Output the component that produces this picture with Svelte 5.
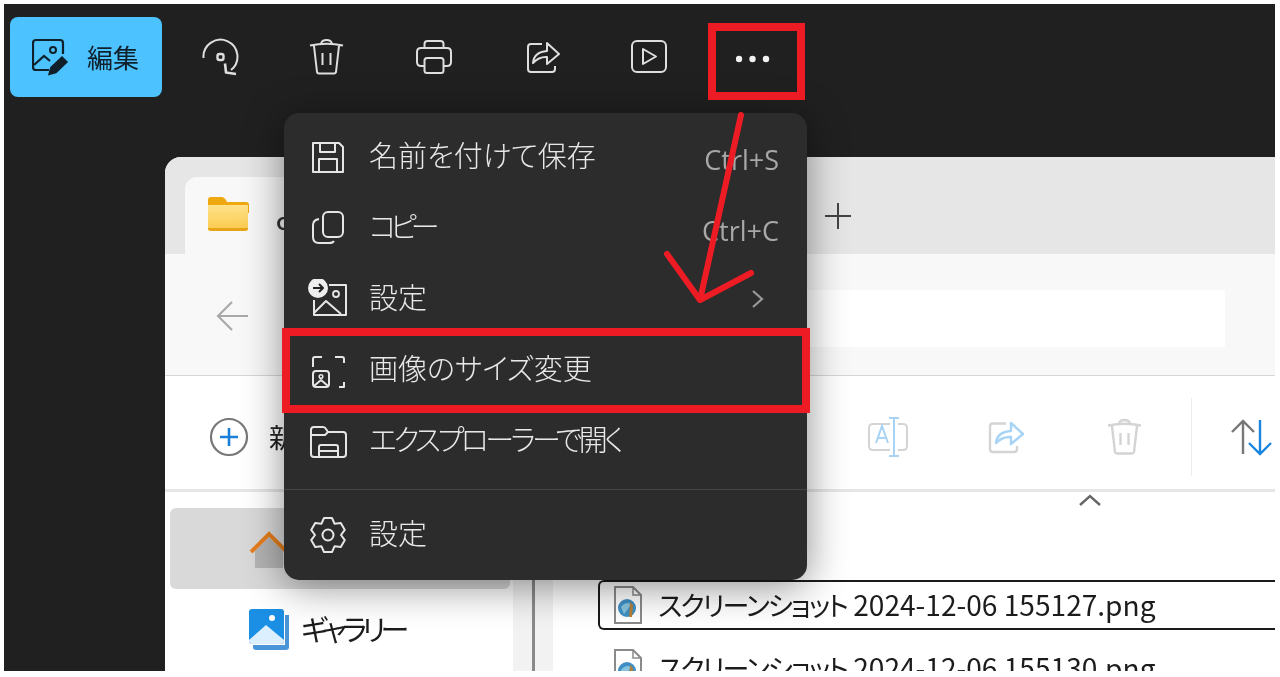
<script>
	// gear outline with six rounded lobes, used by the last menu item
	function gearPath(cx, cy, outer, inner, teeth) {
		let d = '';
		const step = (Math.PI * 2) / teeth;
		for (let i = 0; i < teeth; i++) {
			const a = i * step - Math.PI / 2;
			const p = (r, off) => {
				const x = cx + r * Math.cos(a + off);
				const y = cy + r * Math.sin(a + off);
				return x.toFixed(1) + ' ' + y.toFixed(1);
			};
			d += (i === 0 ? 'M' : 'L') + p(inner, -step * 0.5);
			d += 'L' + p(outer, -step * 0.22);
			d += 'L' + p(outer, step * 0.22);
		}
		return d + 'Z';
	}

	const tools = ['rotate', 'trash', 'print', 'share', 'play', 'more'];

	const menu = [
		{ id: 'save', label: '名前を付けて保存', key: 'Ctrl+S' },
		{ id: 'copy', label: 'コピー', key: 'Ctrl+C', fit: 'kana-short' },
		{ id: 'setas', label: '設定', sub: true },
		{ id: 'resize', label: '画像のサイズ変更' },
		{ id: 'folder', label: 'エクスプローラーで開く', fit: 'kana-long' },
		{ id: 'sep' },
		{ id: 'gear', label: '設定' }
	];

	const files = ['2024-12-06 155127.png', '2024-12-06 155130.png'];
</script>

{#snippet trashIcon()}
	<path d="M3 8.500Q20 5 36 8.500M14 6.500Q15 3 19.500 3T25 6.500M7 9l3 26q.3 1.500 2 1.500h15q1.700 0 2-1.500l3-26M15.500 16v12M23.500 16v12" />
{/snippet}

{#snippet fileIcon()}
	<svg class="file-icon" width="30" height="40" viewBox="0 0 30 40">
		<path d="M2 2h18l8 8v28H2Z" fill="#fff" stroke="#8a8a8a" stroke-width="2" />
		<path d="M20 2v8h8" fill="none" stroke="#8a8a8a" stroke-width="1.500" />
		<circle cx="14" cy="23" r="9" fill="#3f8fc4" />
		<path d="M8 22q5-6 10-3l-3 5-4 5Z" fill="#86c3dd" />
		<path d="M17 17l3 3-1 12-3 0Z" fill="#b5803a" />
	</svg>
{/snippet}

<div class="shot">
	<div class="viewer">
		<header class="toolbar">
			<button class="edit">
				<svg width="40" height="40" viewBox="0 0 40 40" fill="none" stroke="#10202a" stroke-width="2.200">
					<path d="M17 32H4q-3 0-3-3V5q0-3 3-3h24q3 0 3 3v11" />
					<path d="M2 27l10-9 6 5" />
					<circle cx="21" cy="12" r="3" stroke-width="2" />
					<path d="M17 36.500l2-7L30 19l5 5-11 10.500Z" fill="#10202a" stroke-width="1.500" />
				</svg>
				<span>編集</span>
			</button>
			{#each tools as tool}
				<div class="tool">
					<svg width="40" height="40" viewBox="0 0 40 40" fill="none" stroke="#dedede" stroke-width="2" stroke-linejoin="round">
						{#if tool === 'rotate'}
							<path d="M3.500 21A17 17 0 1 1 31 33" />
							<path d="M25 26.500l1 9 10 1.500" stroke-width="2.600" />
							<rect x="17.500" y="17" width="6" height="6" rx="2" stroke-width="2.400" />
						{:else if tool === 'trash'}
							{@render trashIcon()}
						{:else if tool === 'print'}
							<path d="M10.500 11V7q0-3 3-3h13q3 0 3 3v4" />
							<path d="M10.500 29H7q-4 0-4-4V15q0-4 4-4h26q4 0 4 4v10q0 4-4 4h-3.500" />
							<rect x="10.500" y="21" width="19" height="15" rx="2.500" />
						{:else if tool === 'share'}
							<path d="M20 7H9q-3 0-3 3V32q0 3 3 3h21q3 0 3-3v-3" />
							<path d="M11 26q1-11 14-12V6l12 11-12 10v-7q-8-.500-14 6Z" />
						{:else if tool === 'play'}
							<rect x="3" y="4" width="34" height="31" rx="5" />
							<path d="M14 12v15l13-7.500Z" />
						{:else}
							<g fill="#f2f2f2" stroke="none">
								<circle cx="3" cy="22" r="3.200" />
								<circle cx="16.500" cy="22" r="3.200" />
								<circle cx="30" cy="22" r="3.200" />
							</g>
						{/if}
					</svg>
				</div>
			{/each}
		</header>

		<section class="explorer">
			<div class="tabs">
				<div class="tab">
					<svg width="42" height="36" viewBox="0 0 42 36">
						<defs>
							<linearGradient id="folder-front" x1="0" y1="0" x2="0" y2="1">
								<stop offset="0" stop-color="#ffe28a" />
								<stop offset="1" stop-color="#fbc94c" />
							</linearGradient>
						</defs>
						<path d="M1 4q0-3 3-3h11q2 0 4 3l1 2h19q3 0 3 3v8H1Z" fill="#efa90f" />
						<path d="M1 9h40v23q0 3-3 3H4q-3 0-3-3Z" fill="url(#folder-front)" />
						<path d="M1 32h40q0 3-3 3H4q-3 0-3-3Z" fill="#e7a418" />
					</svg>
					<span class="tab-title">o</span>
				</div>
				<svg class="new-tab" width="28" height="28" viewBox="0 0 28 28" stroke="#444" stroke-width="2">
					<path d="M14 1v26M1 14h26" />
				</svg>
			</div>

			<div class="nav">
				<svg width="34" height="32" viewBox="0 0 34 32" fill="none" stroke="#a9a9a9" stroke-width="2.200">
					<path d="M33 16H3M17 2L3 16l14 14" />
				</svg>
				<div class="address"></div>
			</div>

			<div class="commands">
				<svg width="40" height="40" viewBox="0 0 40 40" fill="none">
					<circle cx="20" cy="20" r="18" stroke="#777" stroke-width="2.200" />
					<path d="M20 11v18M11 20h18" stroke="#1a7fd6" stroke-width="2.600" />
				</svg>
				<span class="new-label">新</span>
				<div class="command-icons">
					<svg width="42" height="42" viewBox="0 0 42 42" fill="none" stroke-width="2">
						<path d="M23 8H6q-4 0-4 4v18q0 4 4 4h17M31 8h5q4 0 4 4v18q0 4-4 4h-5" stroke="#d4d4d4" />
						<path d="M9 27l6-17 6 17M11 22h8M22 2h10M27 2v38M22 40h10" stroke="#a7d4f5" />
					</svg>
					<svg width="40" height="40" viewBox="0 0 40 40" fill="none" stroke-width="2.400" stroke-linejoin="round">
						<path d="M19 6.500H6q-3 0-3 3V32q0 3 3 3h21q3 0 3-3v-3" stroke="#d4d4d4" />
						<path d="M9 26q1-11 15-12V6l12 11-12 10v-7q-9-.500-15 6Z" stroke="#a7d4f5" />
					</svg>
					<svg width="40" height="40" viewBox="0 0 40 40" fill="none" stroke="#d4d4d4" stroke-width="2.400">
						{@render trashIcon()}
					</svg>
					<div class="command-sep"></div>
					<svg width="42" height="40" viewBox="0 0 42 40" fill="none" stroke-width="2.400">
						<path d="M13 37V4M2 15L13 4l11 11" stroke="#777" />
						<path d="M30 3v34M19 26l11 11 11-11" stroke="#1a86e0" />
					</svg>
				</div>
			</div>

			<div class="body">
				<aside class="sidebar">
					<div class="side-row selected">
						<svg width="40" height="40" viewBox="0 0 40 40" fill="none">
							<path d="M6 21v17h28V21L20 7Z" fill="#b4b4b4" />
							<path d="M2 22L20 4l18 18" stroke="#e67e1e" stroke-width="4" />
						</svg>
					</div>
					<div class="side-row">
						<svg width="42" height="42" viewBox="0 0 42 42">
							<path d="M4 36h32V6h4v32q0 3-3 3H7q-3 0-3-3Z" fill="#4a94d8" />
							<rect x="0" y="0" width="35" height="35" rx="3" fill="#1a8fe3" />
							<path d="M0 31l17-15 18 15v1q0 3-3 3H3q-3 0-3-3Z" fill="#dcefff" />
							<circle cx="23" cy="9" r="3" fill="#fff" />
						</svg>
						<span class="side-label">ギャラリー</span>
					</div>
				</aside>
				<div class="splitter"><i></i></div>
				<div class="files">
					<div class="sort-hint">
						<svg width="22" height="12" viewBox="0 0 22 12" fill="none" stroke="#666" stroke-width="2.400">
							<path d="M1 11L11 2l10 9" />
						</svg>
					</div>
					{#each files as name, i}
						<div class="file" class:current={i === 0}>
							{@render fileIcon()}
							<span class="file-name"><span class="file-kana">スクリーンショット</span> {name}</span>
						</div>
					{/each}
				</div>
			</div>
		</section>

		<nav class="menu">
			{#each menu as item}
				{#if item.id === 'sep'}
					<div class="menu-sep"></div>
				{:else}
					<div class="menu-item">
						<svg width="40" height="40" viewBox="0 0 40 40" fill="none" stroke="#e6e6e6" stroke-width="2" stroke-linejoin="round">
							{#if item.id === 'save'}
								<path d="M5 6h26l4 4v25H5Z" />
								<path d="M12 6v9h15V6M11 35V22h18v13" />
							{:else if item.id === 'copy'}
								<rect x="15" y="4" width="20" height="25" rx="5" />
								<path d="M11 11q-6 1-6 6v12q0 6 6 6h10q4 0 5-2" />
							{:else if item.id === 'setas'}
								<path d="M21 6h17v30H6V21" />
								<path d="M6 34l12-12 15 13" />
								<circle cx="28" cy="15" r="3" stroke-width="1.800" />
								<circle cx="10" cy="9" r="10" fill="#eee" stroke="none" />
								<path d="M5 9h10M11 5l4 4-4 4" stroke="#222" stroke-width="2" />
							{:else if item.id === 'resize'}
								<path d="M5 17V9q0-2 2-2h7M27 7h7q2 0 2 2v4M36 32v5h-5" />
								<rect x="5" y="21" width="16" height="16" rx="3" />
								<circle cx="13" cy="26.500" r="1.800" stroke-width="1.500" />
								<path d="M6 36l7-6 7 6" />
							{:else if item.id === 'folder'}
								<path d="M3 33V9q0-3 3-3h9q2 0 3 2l2 3h15q3 0 3 3v19q0 3-3 3H6q-3 0-3-3Z" />
								<path d="M3 14h14l3-3M11 35v-9q0-2 2-2h15q2 0 2 2v9M12 30h17" />
							{:else}
								<path d={gearPath(20, 20, 17.500, 13, 6)} />
								<circle cx="20" cy="20" r="5.500" />
							{/if}
						</svg>
						<span class="menu-label {item.fit ?? ''}">{item.label}</span>
						{#if item.key}<span class="menu-key">{item.key}</span>{/if}
						{#if item.sub}
							<svg class="chevron" width="14" height="20" viewBox="0 0 14 20" stroke="#9a9a9a" stroke-width="2.200" fill="none">
								<path d="M2 2l9 8-9 8" />
							</svg>
						{/if}
					</div>
				{/if}
			{/each}
		</nav>
	</div>

	<!-- red annotations drawn over the screenshot -->
	<div class="mark more-mark"></div>
	<div class="mark resize-mark"></div>
	<svg class="arrow" width="1280" height="677" viewBox="0 0 1280 677" fill="none" stroke="#ed1c24" stroke-width="6" stroke-linecap="round" stroke-linejoin="round">
		<path d="M741 115L700 300M667 254L700 300L751 273" />
	</svg>
</div>

<style>
	:global(body) {
		margin: 0;
		background: #fff;
	}

	.shot {
		position: relative;
		width: 1280px;
		height: 677px;
		padding: 4px 5px 6px 4px;
		box-sizing: border-box;
		overflow: hidden;
		background: #fff;
		font-family: "Noto Sans CJK JP", "Noto Sans", sans-serif;
		font-feature-settings: "palt";
	}

	.viewer {
		position: relative;
		height: 100%;
		overflow: hidden;
		background: #202020;
		filter: blur(0.7px);
	}

	.toolbar {
		display: flex;
		align-items: center;
		height: 153px;
		box-sizing: border-box;
		padding: 13px 0 60px 6px;
	}

	.edit {
		display: flex;
		align-items: center;
		gap: 15px;
		width: 152px;
		height: 80px;
		padding: 2px 0 0 22px;
		margin-right: 4px;
		box-sizing: border-box;
		border: 0;
		border-radius: 8px;
		background: #4cc2ff;
		color: #10202a;
		font: inherit;
		font-size: 26px;
		font-weight: 400;
	}

	.edit svg {
		flex: none;
	}

	.edit span {
		margin-top: -3px;
	}

	.tool {
		display: flex;
		align-items: center;
		justify-content: center;
		width: 107.300px;
		height: 80px;
	}

	.explorer {
		margin-left: 161px;
		height: 514px;
		display: flex;
		flex-direction: column;
		overflow: hidden;
		border-top-left-radius: 16px;
		background: #fff;
	}

	.tabs {
		display: flex;
		align-items: flex-end;
		flex: none;
		height: 97px;
		padding-left: 20px;
		box-sizing: border-box;
		background: #e6e6e6;
	}

	.tab {
		display: flex;
		align-items: flex-start;
		gap: 27px;
		width: 600px;
		height: 77px;
		padding: 19px 0 0 22px;
		box-sizing: border-box;
		border-radius: 12px 12px 0 0;
		background: #f8f8f8;
	}

	.tab-title {
		margin-top: 12px;
		font-size: 24px;
		font-weight: 500;
		line-height: 24px;
		color: #333;
	}

	.new-tab {
		margin: 0 0 24px 39px;
	}

	.nav {
		display: flex;
		align-items: center;
		flex: none;
		height: 122px;
		padding: 2px 50px 0 50px;
		box-sizing: border-box;
		border-bottom: 1px solid #d6d6d6;
		background: #f8f8f8;
	}

	.address {
		flex: 1;
		height: 57px;
		margin: 6px 0 0 100px;
		background: #fff;
	}

	.commands {
		display: flex;
		align-items: center;
		flex: none;
		height: 116px;
		padding: 8px 3px 0 44px;
		box-sizing: border-box;
		border-bottom: 3px solid #e6e6e6;
		background: #fff;
	}

	.new-label {
		margin-left: 20px;
		font-size: 27px;
		color: #222;
	}

	.command-icons {
		display: flex;
		align-items: center;
		margin-left: auto;
		gap: 78px;
	}

	.command-sep {
		width: 1px;
		height: 78px;
		margin: 0 -40px 0 -32px;
		background: #ececec;
	}

	.body {
		display: flex;
		flex: 1;
		min-height: 0;
	}

	.sidebar {
		flex: none;
		width: 348px;
		padding: 16px 3px 0 5px;
		box-sizing: border-box;
	}

	.side-row {
		display: flex;
		align-items: center;
		height: 81px;
		padding-left: 79px;
		box-sizing: border-box;
		gap: 10px;
	}

	.side-row.selected {
		align-items: flex-start;
		padding-top: 22px;
		border-radius: 6px;
		background: #d9d9d9;
	}

	.side-label {
		margin-top: -4px;
		font-size: 29px;
		letter-spacing: -5px;
		color: #1c1c1c;
	}

	.splitter {
		flex: none;
		width: 40px;
		display: flex;
		justify-content: center;
		background: #f2f2f2;
	}

	.splitter i {
		width: 3px;
		background: #8a8a8a;
	}

	.files {
		flex: 1;
		min-width: 0;
		padding-left: 45px;
	}

	.sort-hint {
		height: 88px;
		padding: 2px 0 0 481px;
		box-sizing: border-box;
		line-height: 0;
	}

	.file {
		display: flex;
		align-items: center;
		gap: 15px;
		height: 50px;
		padding-left: 15px;
		margin-bottom: 13px;
		box-sizing: border-box;
		white-space: nowrap;
		color: #1c1c1c;
	}

	.file.current {
		border: 2px solid #1a1a1a;
		border-right: 0;
		border-radius: 6px 0 0 6px;
		padding-left: 13px;
	}

	.file-name {
		margin-top: -4px;
		font-size: 28.100px;
	}

	.file-kana {
		font-size: 27px;
		letter-spacing: -2px;
	}

	.file-icon {
		flex: none;
	}

	.menu {
		position: absolute;
		left: 280px;
		top: 109px;
		width: 523px;
		height: 467px;
		padding-top: 8px;
		box-sizing: border-box;
		border-radius: 15px;
		background: #2c2c2c;
		box-shadow: 0 6px 40px rgba(0, 0, 0, 0.45);
	}

	.menu-item {
		display: flex;
		align-items: center;
		height: 71px;
		padding: 0 28px 0 24px;
		box-sizing: border-box;
	}

	.menu-item svg {
		flex: none;
	}

	.menu-label {
		margin: -6px 0 0 21px;
		font-size: 29px;
		font-weight: 300;
		color: #e8e8e8;
	}

	.kana-short {
		letter-spacing: -6.300px;
	}

	.kana-long {
		letter-spacing: -3.500px;
	}

	.menu-key {
		margin-left: auto;
		margin-top: 6px;
		font-family: "Open Sans", sans-serif;
		font-size: 27px;
		color: #a8a8a8;
	}

	.chevron {
		margin-left: auto;
		margin-right: 14px;
	}

	.menu-sep {
		height: 1px;
		margin: 13px 0 9px;
		background: #444;
	}

	.mark {
		position: absolute;
		box-sizing: border-box;
		border: 8px solid #ed1c24;
	}

	.more-mark {
		left: 708px;
		top: 23px;
		width: 97px;
		height: 77px;
	}

	.resize-mark {
		left: 282px;
		top: 328px;
		width: 528px;
		height: 85px;
	}

	.arrow {
		position: absolute;
		left: 0;
		top: 0;
	}
</style>
